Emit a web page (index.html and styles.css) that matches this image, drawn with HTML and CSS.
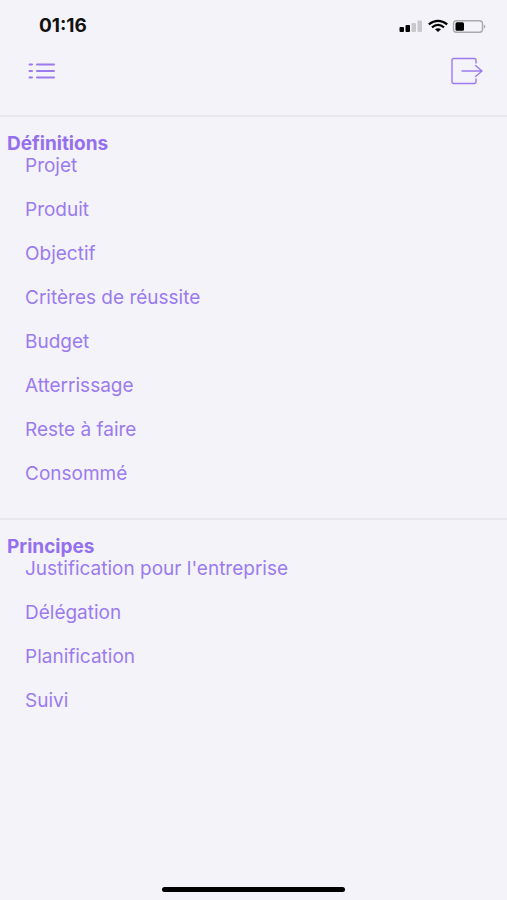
FILE: index.html
```
<!DOCTYPE html>
<html lang="fr">
<head>
<meta charset="utf-8">
<meta name="viewport" content="width=device-width, initial-scale=1">
<title>Définitions et principes</title>
<link rel="stylesheet" href="styles.css">
</head>
<body>
<div class="screen">
  <div class="status">
    <time class="clock">01:16</time>
    <svg class="indicators" width="88" height="16" viewBox="0 0 88 16" aria-hidden="true">
      <rect x="0.500" y="9" width="4.500" height="5" rx="1"/>
      <rect x="6.500" y="7" width="4.500" height="7" rx="1"/>
      <g fill="#c9c8cd">
        <rect x="12.500" y="5" width="4.500" height="9" rx="1"/>
        <rect x="18.500" y="2.500" width="4.500" height="11.500" rx="1"/>
      </g>
      <g fill="none" stroke="#000" stroke-width="2.300">
        <path d="M29.800 6.400Q39 -0.600 48.200 6.400"/>
        <path d="M33 9.300Q39 4.500 45 9.300"/>
      </g>
      <path d="M36 11.300Q39 9.200 42 11.300L39 14Z"/>
      <rect x="54.500" y="2.700" width="29" height="11.600" rx="3" fill="none" stroke="#aaa9ad" stroke-width="1.400"/>
      <rect x="56.500" y="4.200" width="8.500" height="8.600" rx="1.500"/>
      <path d="M84.800 6.500Q88 8.600 84.800 10.800Z" fill="#aaa9ad"/>
    </svg>
  </div>
  <header class="toolbar">
    <button class="tool" type="button" aria-label="Menu">
      <svg width="28" height="18" viewBox="0 0 28 18" fill="none" stroke="#9b7bee" stroke-width="2" stroke-linecap="round">
        <path d="M1.500 2.500H4M9 2.500H26M1.500 9H4M9 9H26M1.500 15.500H4M9 15.500H26"/>
      </svg>
    </button>
    <button class="tool" type="button" aria-label="Quitter">
      <svg width="32" height="28" viewBox="0 0 32 28" fill="none" stroke="#9b7bee" stroke-width="1.400" stroke-linecap="round" stroke-linejoin="round">
        <path d="M25 6V3Q25 1.500 23.500 1.500H2.500Q1 1.500 1 3V25Q1 26.500 2.500 26.500H23.500Q25 26.500 25 25V22"/>
        <path d="M11 14H31M24.500 8.500L31 14L24.500 19.500"/>
      </svg>
    </button>
  </header>
  <main>
    <section class="group">
      <h2>Définitions</h2>
      <ul>
        <li><a href="#projet">Projet</a></li>
        <li><a href="#produit">Produit</a></li>
        <li><a href="#objectif">Objectif</a></li>
        <li><a href="#criteres">Critères de réussite</a></li>
        <li><a href="#budget">Budget</a></li>
        <li><a href="#atterrissage">Atterrissage</a></li>
        <li><a href="#reste">Reste à faire</a></li>
        <li><a href="#consomme">Consommé</a></li>
      </ul>
    </section>
    <section class="group">
      <h2>Principes</h2>
      <ul>
        <li><a href="#justification">Justification pour l'entreprise</a></li>
        <li><a href="#delegation">Délégation</a></li>
        <li><a href="#planification">Planification</a></li>
        <li><a href="#suivi">Suivi</a></li>
      </ul>
    </section>
  </main>
  <div class="home-bar"></div>
</div>
</body>
</html>
```
FILE: styles.css
```
* {
  box-sizing: border-box;
}

body {
  margin: 0;
  background: #f4f3f9;
  color: #9b7bee;
  font-family: Inter, "Liberation Sans", sans-serif;
  font-size: 19px;
  line-height: 22px;
}

.screen {
  display: flex;
  flex-direction: column;
  min-height: 100vh;
}

.status {
  display: flex;
  align-items: center;
  justify-content: space-between;
  padding: 15px 20px 0 39px;
}

.clock {
  color: #111;
  font-weight: 700;
}

.indicators {
  display: block;
}

.toolbar {
  display: flex;
  align-items: center;
  justify-content: space-between;
  padding: 20px 24px 30px 28px;
}

.tool {
  display: flex;
  padding: 0;
  border: 0;
  background: none;
  cursor: pointer;
}

.group {
  padding: 16px 7px 33px;
  border-top: 2px solid #e9e8ee;
}

h2 {
  margin: 0;
  color: #9470ee;
  font-size: 19px;
  font-weight: 700;
}

ul {
  display: grid;
  gap: 22px;
  margin: 0;
  padding: 0 0 0 18px;
  list-style: none;
}

li a {
  color: inherit;
  text-decoration: none;
}

.home-bar {
  width: 36%;
  height: 5px;
  margin: auto auto 8px;
  border-radius: 3px;
  background: #000;
}
```
